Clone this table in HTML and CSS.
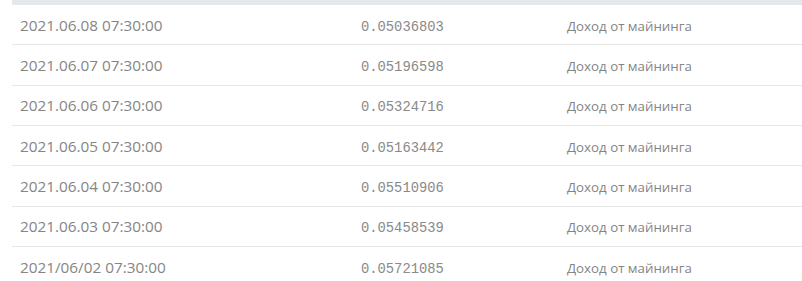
FILE: index.html
```html
<!DOCTYPE html>
<html lang="ru">
<head>
<meta charset="utf-8">
<link rel="stylesheet" href="styles.css">
</head>
<body>
<div class="table">
  <div class="head"></div>
  <div class="row"><span class="date">2021.06.08 07:30:00</span><span class="amount">0.05036803</span><span class="desc">Доход от майнинга</span></div>
  <div class="row"><span class="date">2021.06.07 07:30:00</span><span class="amount">0.05196598</span><span class="desc">Доход от майнинга</span></div>
  <div class="row"><span class="date">2021.06.06 07:30:00</span><span class="amount">0.05324716</span><span class="desc">Доход от майнинга</span></div>
  <div class="row"><span class="date">2021.06.05 07:30:00</span><span class="amount">0.05163442</span><span class="desc">Доход от майнинга</span></div>
  <div class="row"><span class="date">2021.06.04 07:30:00</span><span class="amount">0.05510906</span><span class="desc">Доход от майнинга</span></div>
  <div class="row"><span class="date">2021.06.03 07:30:00</span><span class="amount">0.05458539</span><span class="desc">Доход от майнинга</span></div>
  <div class="row last"><span class="date">2021/06/02 07:30:00</span><span class="amount">0.05721085</span><span class="desc">Доход от майнинга</span></div>
</div>
</body>
</html>
```
FILE: styles.css
```css
html, body {
  margin: 0;
  padding: 0;
  background: #ffffff;
}
.table {
  margin-left: 12px;
  display: flex;
  flex-direction: column;
  color: #858585;
}
.head {
  height: 5px;
  background: #e4e8ed;
}
.row {
  display: grid;
  grid-template-columns: 341px 206px 1fr;
  align-items: baseline;
  align-content: start;
  height: 40.33px;
  padding-top: 9.6px;
  box-sizing: border-box;
  border-bottom: 1px solid #e6e6e6;
}
.row.last {
  border-bottom: none;
}
.date {
  padding-left: 8px;
  font-family: "Open Sans", sans-serif;
  font-size: 15.3px;
}
.amount {
  padding-left: 8px;
  font-family: "Liberation Mono", monospace;
  font-size: 13.8px;
  color: #8a8a8a;
}
.desc {
  padding-left: 8px;
  font-family: "Open Sans", sans-serif;
  font-size: 13.3px;
}
```
